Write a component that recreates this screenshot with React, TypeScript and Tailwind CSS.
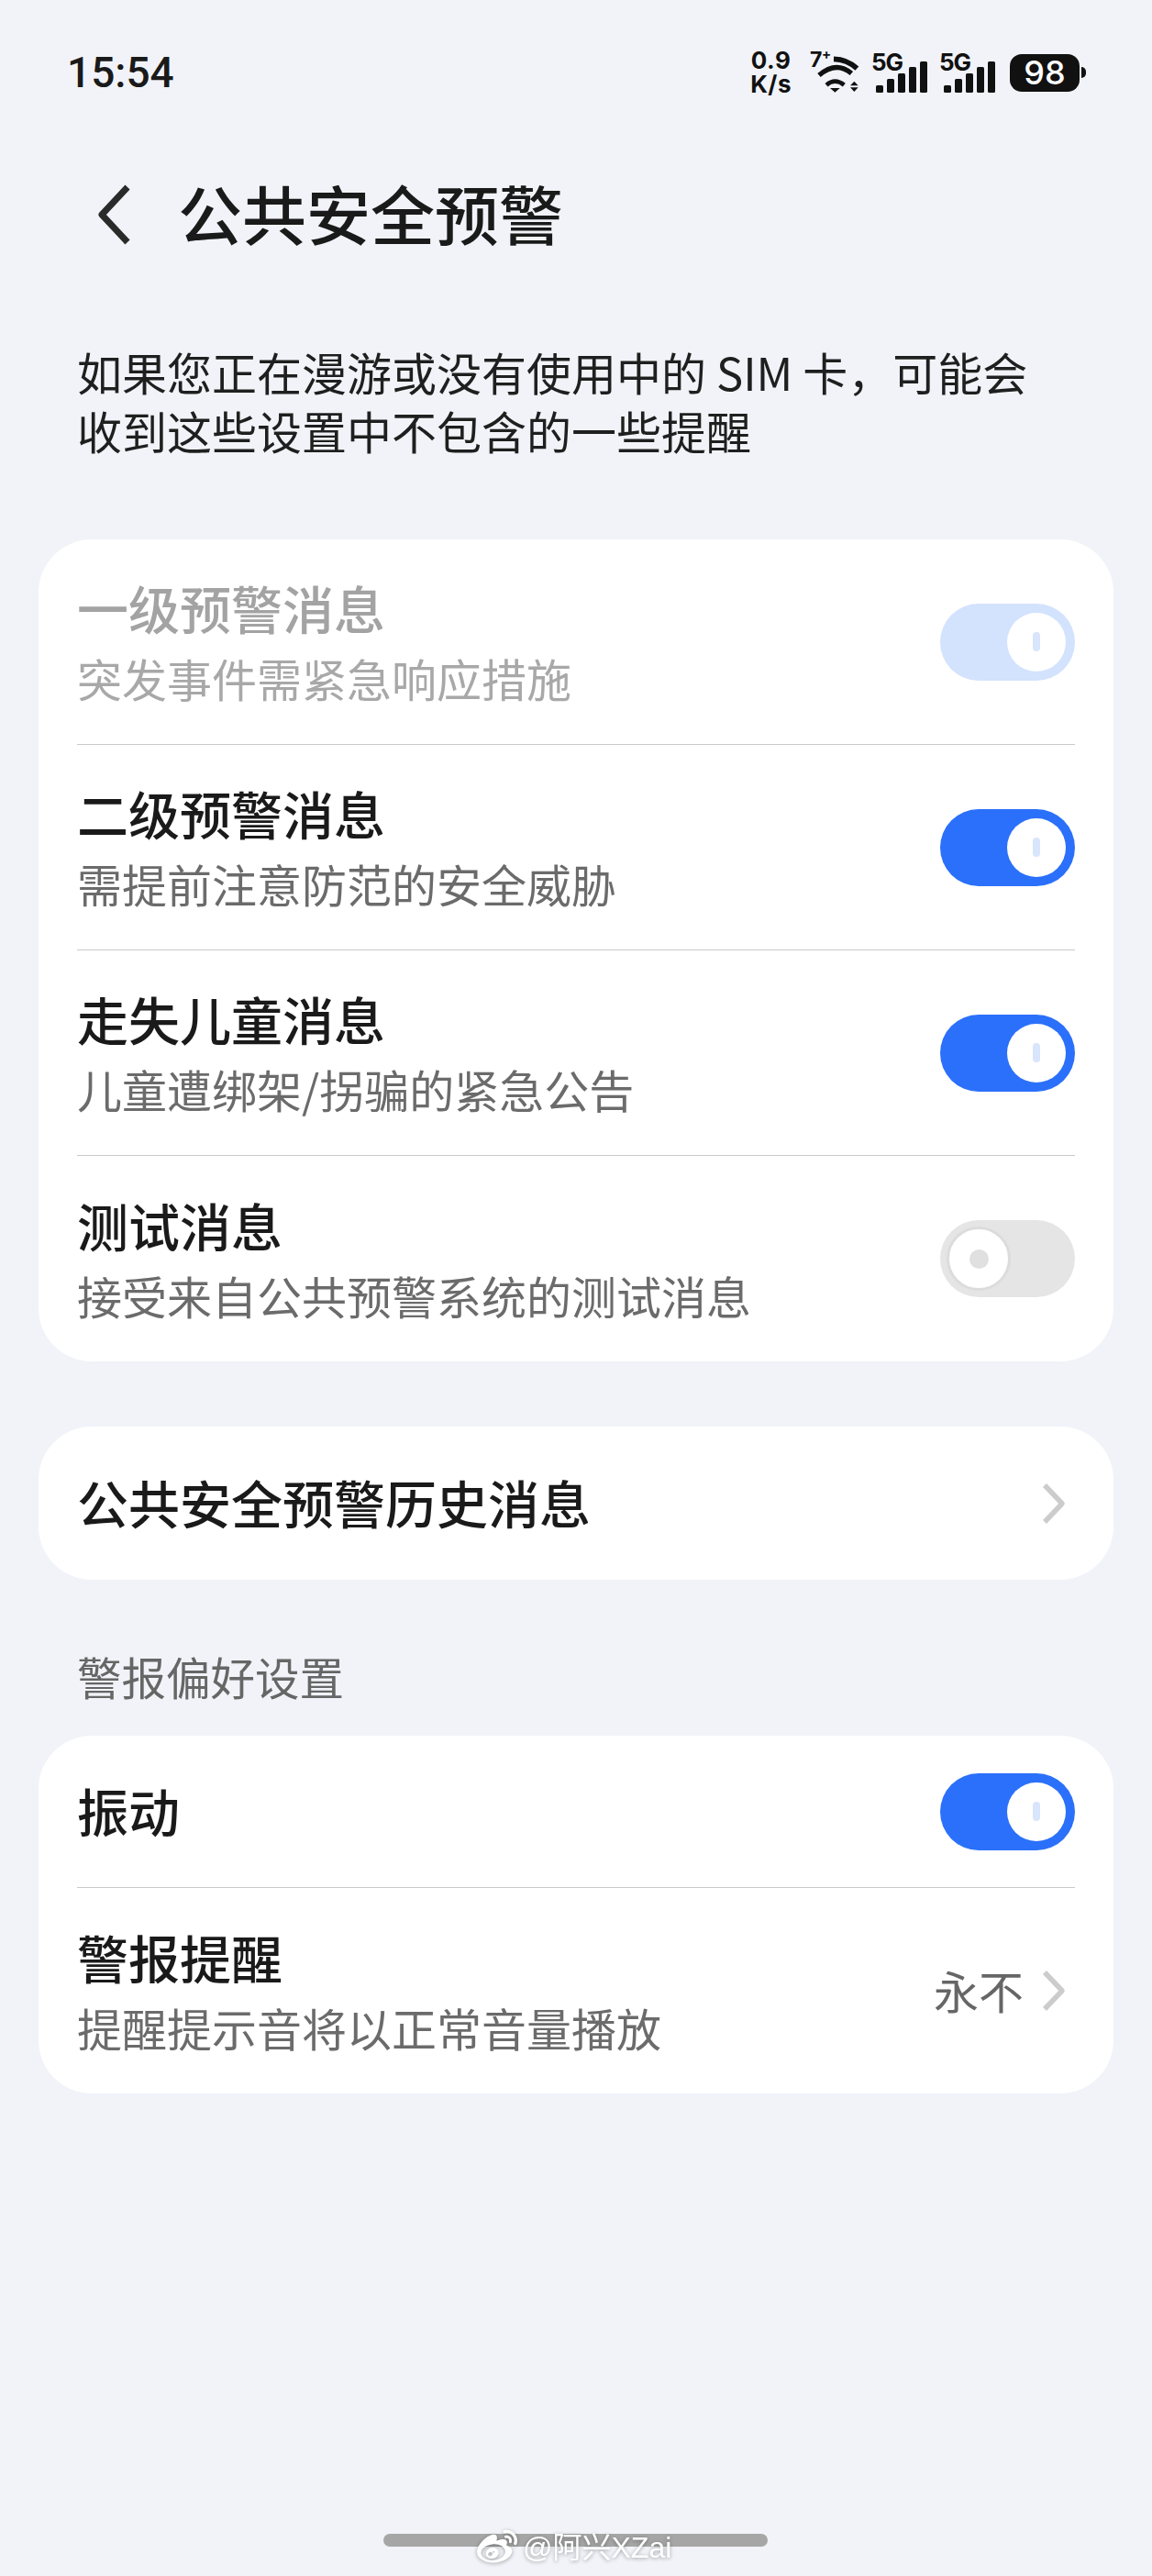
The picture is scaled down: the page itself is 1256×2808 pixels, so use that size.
import React from "react";
import { FaWeibo } from "react-icons/fa";

const cjk = "font-['Noto_Sans_CJK_SC','Noto_Sans',sans-serif]";

function Toggle({ state }: { state: "on" | "off" | "disabled" }) {
  if (state === "off") {
    return (
      <div className="flex h-[84px] w-[147px] shrink-0 items-center rounded-full bg-[#e5e5e5] pl-[7px]">
        <div className="flex h-[70px] w-[70px] items-center justify-center rounded-full border-[3px] border-[#dcdcdc] bg-white">
          <div className="h-[21px] w-[21px] rounded-full bg-[#e0e0e0]" />
        </div>
      </div>
    );
  }
  return (
    <div
      className={
        "flex h-[84px] w-[147px] shrink-0 items-center justify-end rounded-full pr-[10px] " +
        (state === "on" ? "bg-[#2b70fa]" : "bg-[#d3e2fd]")
      }
    >
      <div className="flex h-[64px] w-[64px] items-center justify-center rounded-full bg-white">
        <div className="h-[21px] w-[8px] rounded-full bg-[#d9e5fb]" />
      </div>
    </div>
  );
}

function Chevron() {
  return (
    <svg width="26" height="46" viewBox="0 0 26 46" className="shrink-0" fill="none">
      <path d="M3 3 L22 23 L3 43" stroke="#cccccc" strokeWidth="5.5" strokeLinejoin="round" />
    </svg>
  );
}

function Row({
  title,
  sub,
  right,
  disabled,
  height = "h-[223px]",
}: {
  title: string;
  sub?: string;
  right: React.ReactNode;
  disabled?: boolean;
  height?: string;
}) {
  return (
    <div className={"flex items-center justify-between " + height}>
      <div className="pt-[1px]">
        <div className={"text-[56px] leading-[77px] font-medium " + (disabled ? "text-[#a3a3a3]" : "text-[#1a1a1a]")}>{title}</div>
        {sub && <div className={"text-[49px] leading-[77px] " + (disabled ? "text-[#a8a8a8]" : "text-[#6b6b6b]")}>{sub}</div>}
      </div>
      {right}
    </div>
  );
}

function Signal() {
  return (
    <div className="relative h-[42px] w-[60px]">
      <span className="absolute left-0 top-[-3px] font-['Inter',sans-serif] text-[26px] leading-[24px] font-bold tracking-[-1px] text-[#111]">5G</span>
      <div className="absolute bottom-0 left-[5px] flex items-end gap-[4.5px]">
        <div className="h-[8px] w-[7.5px] rounded-[1.5px] bg-[#111]" />
        <div className="h-[15px] w-[7.5px] rounded-[1.5px] bg-[#111]" />
        <div className="h-[21px] w-[7.5px] rounded-[1.5px] bg-[#111]" />
        <div className="h-[28px] w-[7.5px] rounded-[1.5px] bg-[#111]" />
        <div className="h-[34px] w-[7.5px] rounded-[1.5px] bg-[#111]" />
      </div>
    </div>
  );
}

function Wifi() {
  return (
    <div className="relative h-[45px] w-[56px]">
      <span className="absolute left-0 top-[-4px] font-['Inter',sans-serif] text-[23px] leading-[24px] font-bold text-[#111]">7</span>
      <span className="absolute left-[13px] top-[-6px] font-['Inter',sans-serif] text-[15px] leading-[16px] font-bold text-[#111]">+</span>
      <svg width="56" height="45" viewBox="310 75 168 135" fill="none">
        <path d="M388 97 Q432 98 464 128" stroke="#111" strokeWidth="17" />
        <path d="M340 150 Q396 102 446 144" stroke="#111" strokeWidth="16" />
        <path d="M364 182 Q392 158 422 182" stroke="#111" strokeWidth="14" />
        <path d="M376 192 L408 192 L392 206 Z" fill="#111" />
        <path d="M442 184 L455 170 L468 184 Z M442 190 L468 190 L455 204 Z" fill="#111" />
      </svg>
    </div>
  );
}

export default function App() {
  return (
    <div className={"relative h-[2808px] w-[1256px] overflow-hidden bg-[#f1f3f8] " + cjk}>
      {/* status bar */}
      <div className="flex h-[158px] items-center justify-between pl-[73px] pr-[72px]">
        <span className="font-['Roboto',sans-serif] text-[46px] leading-none font-medium text-[#1a1a1a]">15:54</span>
        <div className="flex items-center">
          <div className="mr-[20px] flex flex-col items-center font-['Inter',sans-serif] text-[26px] leading-[26px] font-bold tracking-[0.5px] text-[#111]">
            <span>0.9</span>
            <span>K/s</span>
          </div>
          <Wifi />
          <div className="ml-[11px] mr-[14px] mt-[1px]">
            <Signal />
          </div>
          <div className="mr-[17px] mt-[1px]">
            <Signal />
          </div>
          <div className="flex items-center">
            <div className="flex h-[41px] w-[76px] items-center justify-center rounded-[13px] bg-[#111] font-['Inter',sans-serif] text-[36px] leading-none font-medium text-white">
              98
            </div>
            <div className="ml-[2px] h-[12px] w-[5px] rounded-r-full bg-[#111]" />
          </div>
        </div>
      </div>

      {/* header */}
      <div className="mt-[28px] flex h-[96px] items-center pl-[104px]">
        <svg width="40" height="70" viewBox="0 0 40 70" fill="none" className="shrink-0">
          <path d="M35 5 L7 35 L35 65" stroke="#2a2a2a" strokeWidth="7" strokeLinejoin="round" />
        </svg>
        <h1 className="mb-[4px] ml-[50px] text-[70px] leading-none font-medium text-[#1a1a1a]">公共安全预警</h1>
      </div>

      {/* description */}
      <p className="mt-[91px] pl-[84px] text-[49px] leading-[64px] text-[#1f1f1f]">
        如果您正在漫游或没有使用中的 SIM 卡，可能会
        <br />
        收到这些设置中不包含的一些提醒
      </p>

      {/* card 1 */}
      <div className="mx-[42px] mt-[87px] rounded-[58px] bg-white pl-[42px] pr-[42px]">
        <div className="border-b border-[#c9c9c9]">
          <Row title="一级预警消息" sub="突发事件需紧急响应措施" disabled right={<Toggle state="disabled" />} />
        </div>
        <div className="border-b border-[#c9c9c9]">
          <Row title="二级预警消息" sub="需提前注意防范的安全威胁" right={<Toggle state="on" />} />
        </div>
        <div className="border-b border-[#c9c9c9]">
          <Row title="走失儿童消息" sub="儿童遭绑架/拐骗的紧急公告" right={<Toggle state="on" />} />
        </div>
        <Row title="测试消息" sub="接受来自公共预警系统的测试消息" height="h-[224px]" right={<Toggle state="off" />} />
      </div>

      {/* card 2 */}
      <div className="mx-[42px] mt-[71px] flex h-[167px] items-center justify-between rounded-[58px] bg-white pl-[42px] pr-[52px]">
        <span className="mb-[4px] text-[56px] font-medium text-[#1a1a1a]">公共安全预警历史消息</span>
        <Chevron />
      </div>

      {/* section label */}
      <div className="flex h-[170px] items-center pl-[84px] pt-[40px]">
        <span className="text-[48.5px] leading-none text-[#666666]">警报偏好设置</span>
      </div>

      {/* card 3 */}
      <div className="mx-[42px] rounded-[58px] bg-white pl-[42px] pr-[42px]">
        <div className="border-b border-[#c9c9c9]">
          <div className="flex h-[165px] items-center justify-between">
            <span className="mb-[4px] text-[56px] font-medium text-[#1a1a1a]">振动</span>
            <Toggle state="on" />
          </div>
        </div>
        <Row
          title="警报提醒"
          sub="提醒提示音将以正常音量播放"
          height="h-[224px]"
          right={
            <div className="flex items-center pr-[10px]">
              <span className="mr-[20px] mb-[4px] text-[49px] leading-none text-[#666666]">永不</span>
              <Chevron />
            </div>
          }
        />
      </div>

      {/* home indicator */}
      <div className="ml-[418px] mt-[480px] h-[14px] w-[419px] rounded-full bg-[#a6a6a6]" />

      {/* watermark */}
      <div className="absolute left-[520px] top-[2755px] flex items-center gap-[6px] text-white [filter:drop-shadow(0_1px_2px_rgba(0,0,0,0.35))]">
        <FaWeibo size={44} />
        <span className="font-['Liberation_Sans','Noto_Sans_CJK_SC',sans-serif] text-[32px] leading-none">@阿兴XZai</span>
      </div>
    </div>
  );
}
